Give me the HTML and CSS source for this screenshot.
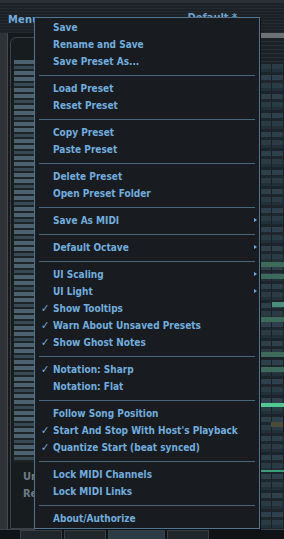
FILE: index.html
```html
<!DOCTYPE html>
<html lang="en">
<head>
	<meta charset="utf-8"/>
	<title>Preset menu</title>
	<link rel="stylesheet" href="styles.css">
</head>
<body>

<div id="app">
	<div class="topbar">
		<span class="menu-label">Menu</span>
		<span class="preset-name">Default *</span>
	</div>

	<div class="workspace">
		<div class="rail"></div>
		<div class="panel">
			<div class="keys"></div>
			<div class="labels">
				<span>Un</span>
				<span>Re</span>
			</div>
		</div>
		<div class="roll">
			<div class="roll-head"></div>
			<div class="roll-grid">
				<span class="note" style="top: 198px; width: 24px;"></span>
				<span class="note" style="top: 210px; width: 24px;"></span>
				<span class="note hot" style="top: 238px; width: 14px; left: 12px;"></span>
				<span class="note" style="top: 253px; width: 24px;"></span>
				<span class="note" style="top: 288px; width: 24px;"></span>
				<span class="note" style="top: 303px; width: 24px;"></span>
				<span class="note bright" style="top: 339px; width: 24px;"></span>
				<span class="note olive" style="top: 358px; width: 12px; left: 11px;"></span>
				<span class="note line" style="top: 406px; width: 24px;"></span>
			</div>
		</div>
	</div>

	<div class="tabs">
		<span class="tab"></span>
		<span class="tab"></span>
		<span class="tab active"></span>
		<span class="tab"></span>
	</div>

	<div class="popup">
		<ul>
			<li>Save</li>
			<li>Rename and Save</li>
			<li>Save Preset As...</li>
			<li class="sep"></li>
			<li>Load Preset</li>
			<li>Reset Preset</li>
			<li class="sep"></li>
			<li>Copy Preset</li>
			<li>Paste Preset</li>
			<li class="sep"></li>
			<li>Delete Preset</li>
			<li>Open Preset Folder</li>
			<li class="sep"></li>
			<li class="sub">Save As MIDI</li>
			<li class="sep"></li>
			<li class="sub">Default Octave</li>
			<li class="sep"></li>
			<li class="sub">UI Scaling</li>
			<li class="sub">UI Light</li>
			<li class="on">Show Tooltips</li>
			<li class="on">Warn About Unsaved Presets</li>
			<li class="on">Show Ghost Notes</li>
			<li class="sep"></li>
			<li class="on">Notation: Sharp</li>
			<li>Notation: Flat</li>
			<li class="sep"></li>
			<li>Follow Song Position</li>
			<li class="on">Start And Stop With Host's Playback</li>
			<li class="on">Quantize Start (beat synced)</li>
			<li class="sep"></li>
			<li>Lock MIDI Channels</li>
			<li>Lock MIDI Links</li>
			<li class="sep"></li>
			<li>About/Authorize</li>
		</ul>
	</div>
</div>

</body>
</html>
```

FILE: styles.css
```css
body {
	margin: 0;
	padding: 0;
	background: #15191c;
	font: bold 10px 'DejaVu Sans Condensed', 'DejaVu Sans', sans-serif;
	color: #72acde;
}

#app {
	position: relative;
	width: 284px;
	height: 539px;
	overflow: hidden;
	display: flex;
	flex-direction: column;
}

.topbar {
	height: 30px;
	flex: none;
	display: flex;
	align-items: flex-start;
	border-top: 3px solid #2b3034;
	background: repeating-linear-gradient(#1b2125 0, #1b2125 2px, #232a2f 2px, #232a2f 3px);
}

.menu-label {
	margin: 10px 0 0 8px;
	font-size: 11px;
	letter-spacing: 0.2px;
}

.preset-name {
	margin: 8px 0 0 148px;
	font-size: 11px;
	color: #6e9fc8;
}

.workspace {
	flex: 1;
	display: flex;
}

.rail {
	width: 7px;
	flex: none;
	background: #2f3337;
	border-right: 1px solid #45494d;
}

.panel {
	flex: 1;
	margin: 4px 2px 0 2px;
	border: 1px solid #3b4246;
	border-radius: 6px 0 0 0;
	background: #171c1f;
	padding: 22px 0 0 3px;
	display: flex;
	flex-direction: column;
}

.keys {
	width: 20px;
	height: 402px;
	background:
		repeating-linear-gradient(#4d6270 0, #4d6270 4px, #1d2428 4px, #1d2428 6px, #3a4a55 6px, #3a4a55 9px, #1d2428 9px, #1d2428 11px, #4d6270 11px, #4d6270 15px, #1d2428 15px, #1d2428 17px);
}

.labels {
	display: flex;
	flex-direction: column;
	gap: 4px;
	margin: 8px 0 0 9px;
	font-size: 11px;
	color: #6d7a84;
}

.roll {
	width: 24px;
	flex: none;
	display: flex;
	flex-direction: column;
	border-left: 1px solid #4e5f6b;
}

.roll-head {
	height: 26px;
	flex: none;
	background: repeating-linear-gradient(#1b2226 0, #1b2226 3px, #263036 3px, #263036 4px);
	border-top: 5px solid #6c7174;
}

.roll-grid {
	position: relative;
	flex: 1;
	background:
		repeating-linear-gradient(90deg, transparent 0, transparent 11px, #1a2226 11px, #1a2226 12px),
		repeating-linear-gradient(#2b3b45 0, #2b3b45 5px, #22303a 5px, #22303a 8px, #1b252b 8px, #1b252b 11px, #2e404b 11px, #2e404b 16px, #1d272d 16px, #1d272d 19px);
}

.note {
	position: absolute;
	left: 0;
	height: 5px;
	background: #3d6a5a;
}

.note.hot {
	background: #4d8c7a;
}

.note.bright {
	height: 4px;
	background: #52c892;
}

.note.olive {
	background: #4a4c38;
}

.note.line {
	height: 2px;
	background: #3f9c78;
}

.tabs {
	height: 9px;
	flex: none;
	display: flex;
	gap: 2px;
	padding-left: 20px;
	background: #101315;
	border-top: 1px solid #3a4146;
}

.tab {
	width: 40px;
	background: #1f272c;
	border: 1px solid #364047;
	border-bottom: none;
}

.tab.active {
	width: 55px;
	background: #2c3c47;
}

.popup {
	position: absolute;
	left: 34px;
	top: 17px;
	width: 224px;
	padding: 1px 0;
	background: #181c20;
	border: 1px solid #52768f;
	box-shadow: 1px 1px 0 #0c0e10;
}

.popup ul {
	list-style: none;
	margin: 0;
	padding: 0;
}

.popup li {
	position: relative;
	height: 17px;
	line-height: 17px;
	padding-left: 18px;
	white-space: nowrap;
}

.popup li.on::before {
	content: "\2713";
	position: absolute;
	left: 6px;
	font-size: 11px;
}

.popup li.sub::after {
	content: "";
	position: absolute;
	right: 2px;
	top: 6px;
	border-left: 3px solid #72acde;
	border-top: 2.5px solid transparent;
	border-bottom: 2.5px solid transparent;
}

.popup li.sep {
	height: 1px;
	margin: 5px 4px 4px 4px;
	padding: 0;
	background: #48657a;
}
```
